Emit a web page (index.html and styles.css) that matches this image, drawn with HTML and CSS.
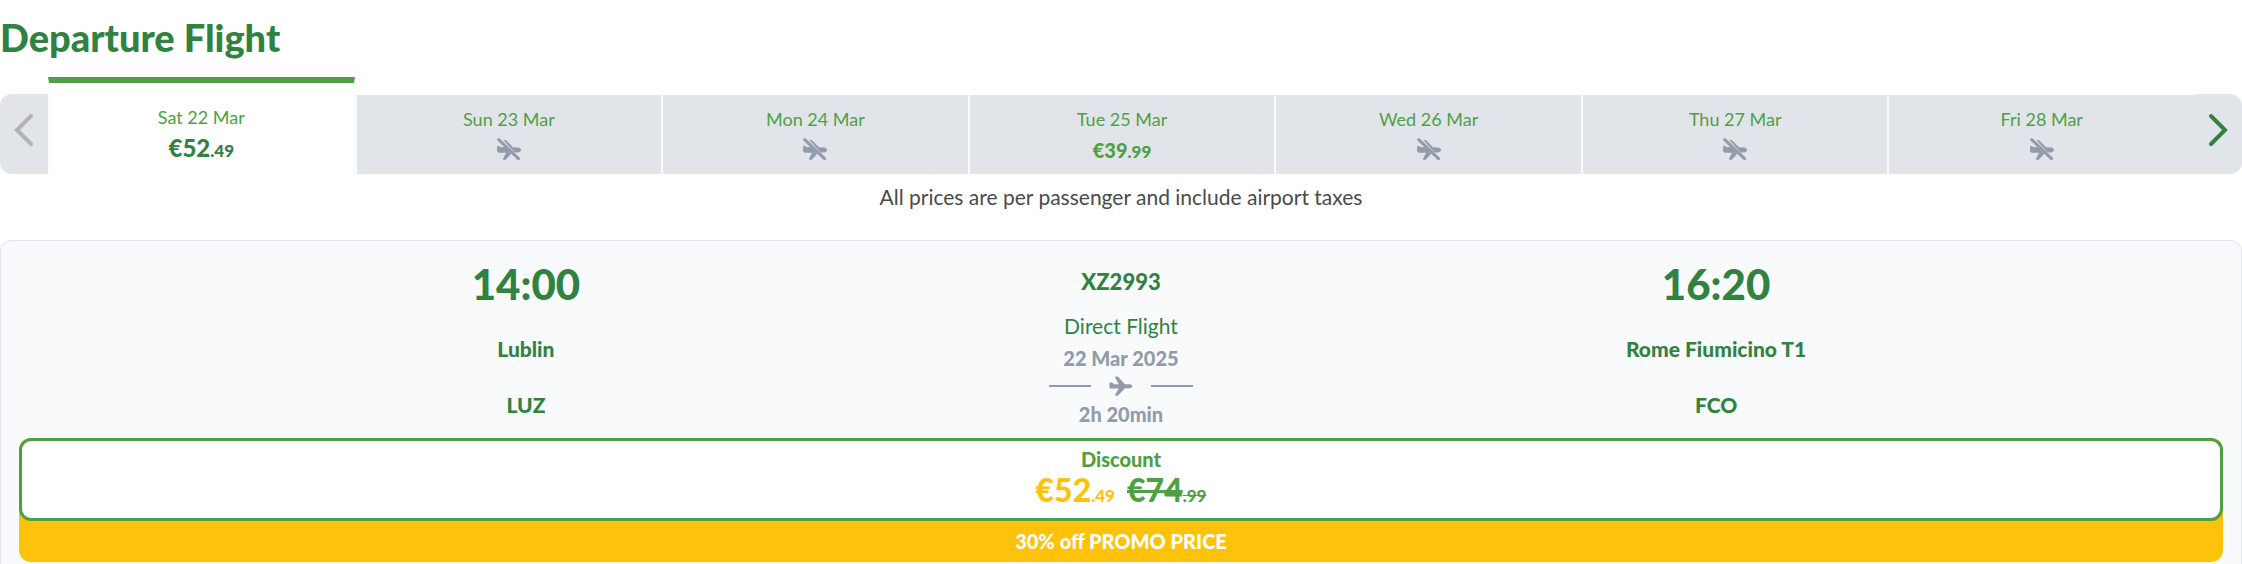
FILE: index.html
```html
<!DOCTYPE html>
<html lang="en">
<head>
    <meta charset="UTF-8">
    <title>Departure Flight</title>
    <meta name="viewport" content="width=device-width, initial-scale=1.0">
    <link rel="stylesheet" href="styles.css">
</head>
<body>

<svg class="symbols" aria-hidden="true">
    <symbol id="plane" viewBox="0 0 24 20">
        <path d="M1 6.500h1.600c.5 0 .8.2 1.100.6L5 8.200h4.800L6.200 1.800C5.800.9 6.200.4 7 .4h1.100c.5 0 .9.2 1.200.6l6.700 7.200H20c2 0 3.400.8 3.400 2s-1.400 2-3.400 2h-4l-6.700 7c-.3.400-.7.600-1.200.600H7c-.8 0-1.200-.6-.8-1.400l3.600-5.800H1.800c-.8 0-1.300-.4-1.300-1.200V7c0-.3.200-.5.500-.5z"/>
    </symbol>
    <symbol id="no-plane" viewBox="0 0 24 22">
        <path d="M.5 8.800c0-.6.800-.8 1.300-.4l1.600 1.200h4.200L14 15.400l-4.600 5.200c-.5.700-1.200 1.200-2 1.200-.8 0-1.100-.5-.8-1.200l3.200-6.400H2c-.9 0-1.500-.6-1.500-1.500z"/>
        <path d="M7.200 2.500c.8-.5 1.500-.2 2.200.5l6.800 6.900h4.300c1.800 0 3.100.7 3.100 2s-1.300 2.100-3.100 2.100h-2.900z"/>
        <path class="slash" d="M1.700 1.700l19.800 19"/>
    </symbol>
</svg>

<h2 class="title">Departure Flight</h2>

<div class="week">
    <button class="arrow prev" aria-label="Previous days" disabled>
        <svg viewBox="0 0 20 34"><path d="M17 3L3 17l14 14"/></svg>
    </button>
    <button class="day active">
        <span class="date">Sat 22 Mar</span>
        <span class="price">€52<small>.49</small></span>
    </button>
    <button class="day">
        <span class="date">Sun 23 Mar</span>
        <svg class="none"><use href="#no-plane"/></svg>
    </button>
    <button class="day">
        <span class="date">Mon 24 Mar</span>
        <svg class="none"><use href="#no-plane"/></svg>
    </button>
    <button class="day">
        <span class="date">Tue 25 Mar</span>
        <span class="price">€39<small>.99</small></span>
    </button>
    <button class="day">
        <span class="date">Wed 26 Mar</span>
        <svg class="none"><use href="#no-plane"/></svg>
    </button>
    <button class="day">
        <span class="date">Thu 27 Mar</span>
        <svg class="none"><use href="#no-plane"/></svg>
    </button>
    <button class="day">
        <span class="date">Fri 28 Mar</span>
        <svg class="none"><use href="#no-plane"/></svg>
    </button>
    <button class="arrow next" aria-label="Next days">
        <svg viewBox="0 0 20 34"><path d="M3 3l14 14L3 31"/></svg>
    </button>
</div>

<p class="note">All prices are per passenger and include airport taxes</p>

<div class="flight">
    <div class="route">
        <div class="airport">
            <div class="time">14:00</div>
            <div class="city">Lublin</div>
            <div class="code">LUZ</div>
        </div>
        <div class="info">
            <div class="number">XZ2993</div>
            <div class="direct">Direct Flight</div>
            <div class="muted">22 Mar 2025</div>
            <div class="line"><svg><use href="#plane"/></svg></div>
            <div class="muted">2h 20min</div>
        </div>
        <div class="airport">
            <div class="time">16:20</div>
            <div class="city">Rome Fiumicino T1</div>
            <div class="code">FCO</div>
        </div>
    </div>
    <div class="offer">
        <button class="fare">
            <span class="fare-name">Discount</span>
            <span class="fare-prices">
                <span class="new-price">€52<small>.49</small></span>
                <span class="old-price"><s>€74</s><small><s>.99</s></small></span>
            </span>
        </button>
        <div class="promo">30% off PROMO PRICE</div>
    </div>
</div>

</body>
</html>
```

FILE: styles.css
```css
* {
    box-sizing: border-box;
}
body {
    margin: 0;
    font-family: Lato, "Noto Sans", sans-serif;
    font-size: 20px;
    color: #318241;
    background: #fff;
}
button {
    margin: 0;
    padding: 0;
    border: 0;
    font: inherit;
    color: inherit;
    cursor: pointer;
}
.symbols {
    display: none;
}
.title {
    margin: 0;
    padding: 13px 0 16px;
    font-size: 38px;
    font-weight: 900;
    line-height: 48px;
}
.week {
    display: flex;
    align-items: flex-end;
}
.arrow {
    display: flex;
    align-items: center;
    justify-content: center;
    width: 48px;
    height: 80px;
    padding-bottom: 8px;
    background: #e1e5ea;
}
.arrow svg {
    width: 20px;
    height: 34px;
    fill: none;
    stroke: #318241;
    stroke-width: 4px;
    stroke-linecap: round;
}
.prev {
    border-radius: 12px 0 0 12px;
}
.prev svg {
    stroke: #b3b3b3;
}
.next {
    border-radius: 0 12px 12px 0;
}
.day {
    display: flex;
    flex: 1;
    flex-direction: column;
    align-items: center;
    height: 79px;
    padding-top: 11px;
    border-left: 2px solid #f8fafc;
    background: #e1e5ea;
    color: #4fa045;
}
.date {
    font-size: 18px;
    line-height: 26px;
}
.price {
    margin-top: 3px;
    font-size: 20px;
    font-weight: 900;
    line-height: 30px;
}
.price small {
    font-size: 17px;
}
.day.active {
    height: 97px;
    padding-top: 21px;
    border: 1px solid #f8fafc;
    border-top: 6px solid #4fa045;
    border-bottom: 0;
    background: #fff;
}
.active .price {
    font-size: 24px;
    color: #318241;
}
.none {
    width: 24px;
    height: 22px;
    margin-top: 6px;
    fill: #929baa;
    stroke: #929baa;
}
.none path {
    stroke: none;
}
.slash {
    stroke: #929baa;
    stroke-width: 3px;
    stroke-linecap: round;
}
.note {
    margin: 0;
    padding: 9px 0 29px;
    font-size: 21px;
    line-height: 28px;
    text-align: center;
    color: #4a4a4a;
}
.flight {
    padding: 18px 18px 3px;
    border: 1px solid #e1e5ea;
    border-bottom: 0;
    border-radius: 12px 12px 0 0;
    background: #f8fafc;
}
.route {
    display: grid;
    grid-template-columns: repeat(3, 27%);
    justify-content: center;
    padding-bottom: 8px;
    text-align: center;
}
.time {
    font-size: 42px;
    font-weight: 900;
    line-height: 50px;
}
.city,
.code {
    margin-top: 24px;
    font-size: 21px;
    font-weight: 900;
    line-height: 32px;
}
.number {
    padding: 7px 0 12px;
    font-size: 22px;
    font-weight: 900;
    line-height: 32px;
}
.direct,
.muted {
    line-height: 32px;
}
.direct {
    font-size: 21px;
}
.muted {
    font-weight: 900;
    color: #929baa;
}
.line {
    display: flex;
    align-items: center;
    justify-content: center;
    gap: 18px;
    height: 24px;
}
.line::before,
.line::after {
    content: "";
    width: 42px;
    height: 2px;
    background: #929baa;
}
.line svg {
    width: 24px;
    height: 20px;
    fill: #929baa;
}
.offer {
    border-radius: 12px;
    background: #ffc20a;
}
.fare {
    display: block;
    width: 100%;
    padding: 4px 0 5px;
    border: 3px solid #4fa045;
    border-radius: 12px;
    background: #fff;
    font-weight: 900;
    color: #4fa045;
}
.fare-name {
    display: block;
    line-height: 28px;
}
.fare-prices {
    display: flex;
    justify-content: center;
    gap: 12px;
    font-size: 32px;
    line-height: 34px;
}
.fare-prices small {
    font-size: 17px;
}
.new-price {
    color: #ffc20a;
}
.promo {
    font-weight: 900;
    line-height: 41px;
    text-align: center;
    color: #fff;
}
```
